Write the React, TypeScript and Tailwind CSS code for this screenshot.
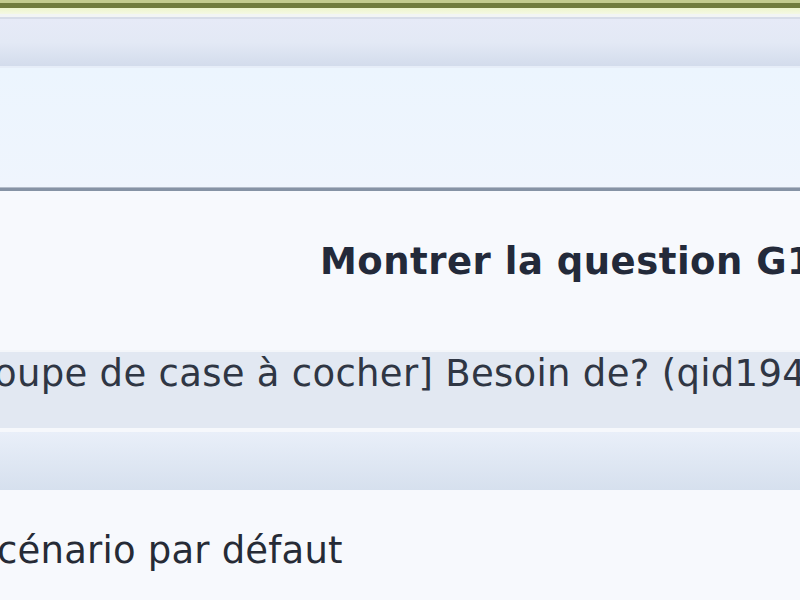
import React from "react";

const sans = { fontFamily: '"DejaVu Sans", Verdana, sans-serif' };

export default function App() {
  return (
    <div className="w-[800px] h-[600px] overflow-hidden bg-[#f7f9fd] flex flex-col">
      {/* top olive rule */}
      <div className="h-[3px] bg-[#c3cb8e]" />
      <div className="h-[5px] bg-[#717c3d]" />
      <div className="h-[6px] bg-gradient-to-b from-[#eef5cc] to-[#f4f8e4]" />
      <div className="h-[3px] bg-[#f2f5f4]" />
      <div className="h-[2px] bg-[#d6dce8]" />
      {/* toolbar band */}
      <div className="h-[47px] bg-gradient-to-b from-[#e6eaf7] via-[#e3e9f5] to-[#d3dcec]" />
      <div className="h-[2px] bg-[#e6edf8]" />
      {/* light panel */}
      <div className="h-[119px] bg-gradient-to-b from-[#ecf5fe] to-[#eff5fd]" />
      <div className="h-[1px] bg-[#b3bcc9]" />
      <div className="h-[3px] bg-[#8693a5]" />
      {/* title area */}
      <div className="h-[159px] pl-[320px] pt-[52px]">
        <span
          className="block whitespace-nowrap font-bold text-[37px] leading-none text-[#232a3a] tracking-[0.5px]"
          style={sans}
        >
          Montrer la question G1
        </span>
      </div>
      <div className="h-[2px] bg-[#f4f6fa]" />
      {/* question row */}
      <div className="h-[76px] bg-[#e2e8f2] pt-[3px]">
        <span
          className="block whitespace-nowrap ml-[-6px] text-[37px] leading-none tracking-[0.3px] text-[#2f3644]"
          style={sans}
        >
          oupe de case à cocher] Besoin de? (qid194
        </span>
      </div>
      <div className="h-[4px] bg-[#f6f8fc]" />
      {/* sub header band */}
      <div className="h-[58px] bg-gradient-to-b from-[#e9eff9] to-[#d6e0ee]" />
      {/* scenario row */}
      <div className="flex-1 bg-[#f7f9fd] pt-[42px]">
        <span
          className="block whitespace-nowrap ml-[-3px] text-[37px] leading-none tracking-[0.2px] text-[#262b36]"
          style={sans}
        >
          cénario par défaut
        </span>
      </div>
    </div>
  );
}
